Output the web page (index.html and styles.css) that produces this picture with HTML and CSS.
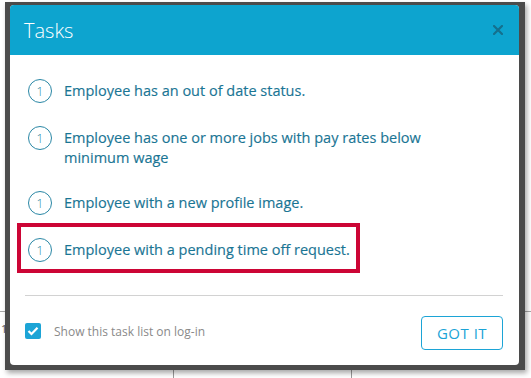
FILE: index.html
```html
<!DOCTYPE html>
<html>
<head>
<meta charset="utf-8">
<link rel="stylesheet" href="styles.css">
</head>
<body>
<div class="page">
  <div class="table-row">
    <div class="cell cell-a">1</div>
    <div class="cell cell-b"></div>
    <div class="cell cell-c"></div>
  </div>
</div>

<div class="frame">
  <div class="modal">
    <div class="header">
      <h1 class="title">Tasks</h1>
      <svg class="close" width="10" height="10" viewBox="0 0 10 10"><path d="M1 1 L9 9 M9 1 L1 9" stroke="#15708d" stroke-width="2.2" stroke-linecap="square"/></svg>
    </div>
    <div class="body">
      <ul class="tasks">
        <li class="task"><span class="count">1</span><span class="label">Employee has an out of date status.</span></li>
        <li class="task"><span class="count">1</span><span class="label">Employee has one or more jobs with pay rates below minimum wage</span></li>
        <li class="task"><span class="count">1</span><span class="label">Employee with a new profile image.</span></li>
        <li class="task highlighted"><span class="count">1</span><span class="label">Employee with a pending time off request.</span></li>
      </ul>
    </div>
    <div class="footer">
      <label class="show">
        <span class="checkbox"><svg width="12" height="10" viewBox="0 0 12 10"><path d="M1.5 5 L4.5 8 L10.5 1.8" fill="none" stroke="#fff" stroke-width="2.2"/></svg></span>
        <span class="show-text">Show this task list on log-in</span>
      </label>
      <button class="got-it">GOT IT</button>
    </div>
  </div>
</div>
</body>
</html>
```
FILE: styles.css
```css
html, body {
  margin: 0;
  padding: 0;
  background: #ffffff;
}
body {
  width: 531px;
  height: 378px;
  overflow: hidden;
  position: relative;
  font-family: "Open Sans", "DejaVu Sans", sans-serif;
}
.page {
  padding-top: 311px;
}
.table-row {
  display: flex;
  height: 66px;
  border-top: 1px solid #a8a8a8;
}
.cell {
  border-right: 1px solid #9a9a9a;
  font-size: 11px;
  color: #555;
  padding-top: 9px;
}
.cell-a { width: 174px; padding-left: 1px; box-sizing: border-box; }
.cell-b { width: 177px; }
.cell-c { flex: 1; border-right: none; }

.frame {
  position: absolute;
  left: 5px;
  top: 2px;
  width: 520px;
  height: 368px;
  box-sizing: border-box;
  padding: 3px 6px 5px 5px;
  background: #4b4b4b;
  box-shadow: 2px 3px 5px rgba(0, 0, 0, 0.35);
}
.modal {
  width: 509px;
  height: 360px;
  background: #ffffff;
  border-radius: 4px;
  overflow: hidden;
  display: flex;
  flex-direction: column;
}
.header {
  height: 50px;
  flex: none;
  background: #0da4cf;
  display: flex;
  align-items: center;
  justify-content: space-between;
  padding: 0 16px 0 14px;
}
.title {
  margin: 0;
  font-size: 20px;
  font-weight: 300;
  color: #ffffff;
}
.close {
  margin-top: -1px;
}
.body {
  flex: 1;
  padding: 24px 15px 0 18px;
  position: relative;
}
.tasks {
  list-style: none;
  margin: 0;
  padding: 0;
}
.task {
  display: flex;
  align-items: flex-start;
  gap: 12px;
  margin-bottom: 23px;
  position: relative;
}
.count {
  flex: none;
  width: 24px;
  height: 24px;
  box-sizing: border-box;
  border: 1.5px solid #2a87a5;
  border-radius: 50%;
  display: flex;
  align-items: center;
  justify-content: center;
  font-size: 12px;
  font-weight: 300;
  color: #2a87a5;
}
.label {
  padding-top: 2px;
  font-size: 14.5px;
  line-height: 20px;
  color: #1a7594;
  max-width: 380px;
  -webkit-text-stroke: 0.15px #1a7594;
}
.highlighted::after {
  content: "";
  position: absolute;
  left: -11px;
  top: -15px;
  width: 343px;
  height: 50px;
  box-sizing: border-box;
  border: 4px solid #cc0535;
}
.footer {
  flex: none;
  margin: 0 16px 0 15px;
  border-top: 1px solid #d2d2d2;
  padding: 20px 0 15px;
  display: flex;
  align-items: center;
  justify-content: space-between;
}
.show {
  display: flex;
  align-items: center;
  gap: 13px;
  margin-bottom: 4px;
}
.checkbox {
  width: 16px;
  height: 16px;
  border-radius: 2px;
  background: #1ca4d6;
  display: flex;
  align-items: center;
  justify-content: center;
}
.show-text {
  font-size: 12px;
  color: #8a8a8a;
}
.got-it {
  width: 82px;
  height: 34px;
  box-sizing: border-box;
  border: 1px solid #1ca4d6;
  border-radius: 4px;
  background: #ffffff;
  color: #1ca4d6;
  font-family: "Open Sans", "DejaVu Sans", sans-serif;
  font-size: 15px;
  letter-spacing: 0.5px;
  padding: 0;
}
```
